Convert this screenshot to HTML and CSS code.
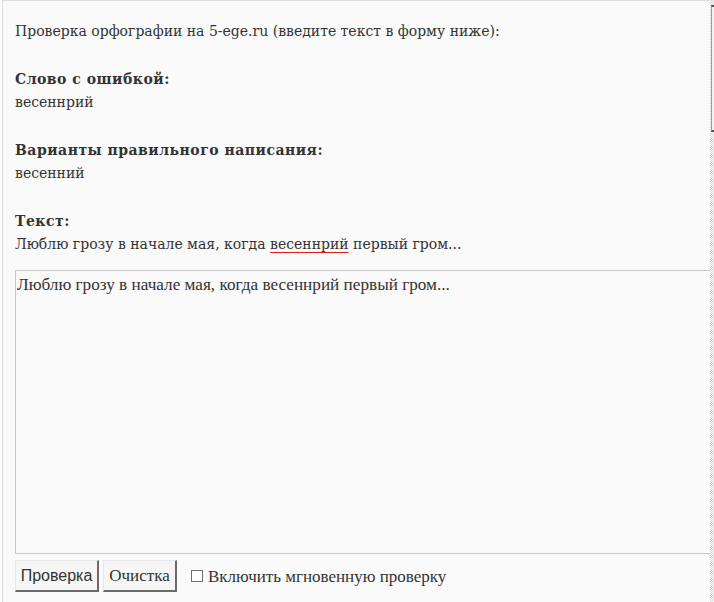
FILE: index.html
```html
<!DOCTYPE html>
<html lang="ru">
<head>
<meta charset="utf-8">
<title>Проверка орфографии</title>
<link rel="stylesheet" href="styles.css">
</head>
<body>
<div class="page">
  <div class="panel">
    <p class="line">Проверка орфографии на 5-ege.ru (введите текст в форму ниже):</p>
    <p class="block"><b class="head">Слово с ошибкой:</b><br>весеннрий</p>
    <p class="block"><b class="head">Варианты правильного написания:</b><br>весенний</p>
    <p class="block"><b class="head">Текст:</b><br>Люблю грозу в начале мая, когда <span class="err">весеннрий</span> первый гром...</p>
    <textarea class="area">Люблю грозу в начале мая, когда весеннрий первый гром...</textarea>
    <div class="controls">
      <button class="btn btn-sans" type="button">Проверка</button>
      <button class="btn btn-serif" type="button">Очистка</button>
      <label class="instant"><span class="box"></span>Включить мгновенную проверку</label>
    </div>
  </div>
  <div class="scroll"><div class="thumb"></div></div>
</div>
</body>
</html>
```
FILE: styles.css
```css
html, body {
  margin: 0;
  padding: 0;
  background: #ffffff;
}
.page {
  display: flex;
  height: 602px;
  overflow: hidden;
  padding-left: 2px;
}
.panel {
  flex: 1;
  min-width: 0;
  background: #fafafa;
  border-left: 1px solid #dcdcdc;
  border-top: 1px solid #dcdcdc;
  padding: 7px 0 0 12px;
  overflow: hidden;
  font-family: "DejaVu Serif", "Liberation Serif", serif;
  font-size: 14px;
  line-height: 23px;
  color: #333333;
}
.panel p {
  margin: 0;
}
.line {
  margin-top: 12px !important;
}
.block {
  margin-top: 25px !important;
}
.head {
  font-weight: bold;
  letter-spacing: 0.5px;
}
.err {
  text-decoration: underline;
  text-decoration-color: #d42020;
  text-underline-offset: 3px;
}
.area {
  display: block;
  box-sizing: border-box;
  margin: 14px 0 0 0;
  width: 720px;
  height: 284px;
  padding: 4px 1px;
  border: 1px solid #c8c8c8;
  border-right: none;
  background: #fafafa;
  font-family: "Liberation Serif", serif;
  font-size: 17.2px;
  line-height: 20px;
  color: #333333;
  resize: none;
}
.controls {
  display: flex;
  align-items: center;
  gap: 4px;
  margin-top: 6px;
}
.btn {
  box-sizing: border-box;
  height: 32px;
  padding: 0 3px;
  background: #f6f6f6;
  border-style: solid;
  border-width: 1px 2px 2px 1px;
  border-color: #e8e8e8 #6a6a6a #6a6a6a #e8e8e8;
  color: #333333;
  font-size: 16px;
}
.btn-sans {
  width: 84px;
  font-family: "Liberation Sans", sans-serif;
}
.btn-serif {
  width: 74px;
  font-family: "Liberation Serif", serif;
  font-size: 17px;
}
.instant {
  display: flex;
  align-items: center;
  margin-left: 10px;
  font-family: "Liberation Serif", serif;
  font-size: 17px;
  color: #333333;
}
.box {
  width: 12px;
  height: 12px;
  box-sizing: border-box;
  border: 1px solid #707070;
  background: #ffffff;
  margin-right: 5px;
}
.scroll {
  position: relative;
  width: 4px;
  background: repeating-conic-gradient(#d4d4d4 0 25%, #ffffff 0 50%) 0 0 / 2px 2px;
}
.thumb {
  position: absolute;
  left: 1px;
  top: 5px;
  width: 3px;
  height: 127px;
  box-sizing: border-box;
  border-left: 1px solid #9a9a9a;
  border-top: 2px solid #555555;
  border-bottom: 2px solid #555555;
  background: #f0f0f0;
}
```
